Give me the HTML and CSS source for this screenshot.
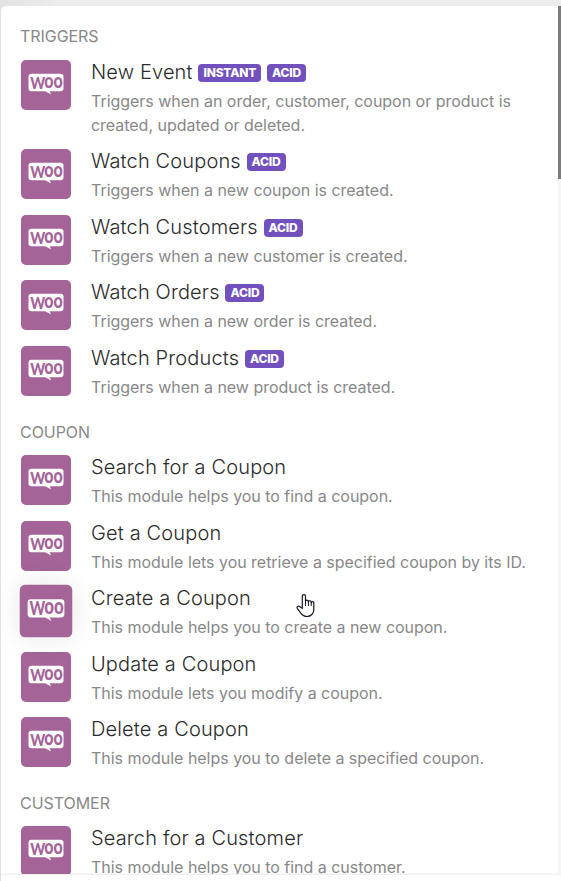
FILE: index.html
```
<!DOCTYPE html>
<html lang="en">
<head>
	<meta charset="utf-8">
	<title>WooCommerce modules</title>
	<link rel="stylesheet" href="styles.css">
</head>
<body>
	<svg class="defs" aria-hidden="true">
		<symbol id="woo" viewBox="0 0 50 50">
			<path fill="#fff" d="M10.500 13.700h29a3 3 0 0 1 3 3v11.500a3 3 0 0 1-3 3h-11l1.700 3.300-6-3.300h-13.700a3 3 0 0 1-3-3v-11.500a3 3 0 0 1 3-3z"/>
			<g class="logo-text">
				<text x="9.300" y="28.800" font-size="17.500" textLength="15" lengthAdjust="spacingAndGlyphs">W</text>
				<text x="23.300" y="28" font-size="21" textLength="18.500" lengthAdjust="spacingAndGlyphs">oo</text>
			</g>
		</symbol>
	</svg>

	<div class="panel">
		<div class="list">
			<h3 class="group">TRIGGERS</h3>
			<div class="module">
				<svg class="icon"><use href="#woo"/></svg>
				<div class="info">
					<div class="name">New Event <span class="badge">INSTANT</span> <span class="badge">ACID</span></div>
					<p>Triggers when an order, customer, coupon or product is created, updated or deleted.</p>
				</div>
			</div>
			<div class="module">
				<svg class="icon"><use href="#woo"/></svg>
				<div class="info">
					<div class="name">Watch Coupons <span class="badge">ACID</span></div>
					<p>Triggers when a new coupon is created.</p>
				</div>
			</div>
			<div class="module">
				<svg class="icon"><use href="#woo"/></svg>
				<div class="info">
					<div class="name">Watch Customers <span class="badge">ACID</span></div>
					<p>Triggers when a new customer is created.</p>
				</div>
			</div>
			<div class="module">
				<svg class="icon"><use href="#woo"/></svg>
				<div class="info">
					<div class="name">Watch Orders <span class="badge">ACID</span></div>
					<p>Triggers when a new order is created.</p>
				</div>
			</div>
			<div class="module">
				<svg class="icon"><use href="#woo"/></svg>
				<div class="info">
					<div class="name">Watch Products <span class="badge">ACID</span></div>
					<p>Triggers when a new product is created.</p>
				</div>
			</div>

			<h3 class="group">COUPON</h3>
			<div class="module">
				<svg class="icon"><use href="#woo"/></svg>
				<div class="info">
					<div class="name">Search for a Coupon</div>
					<p>This module helps you to find a coupon.</p>
				</div>
			</div>
			<div class="module">
				<svg class="icon"><use href="#woo"/></svg>
				<div class="info">
					<div class="name">Get a Coupon</div>
					<p>This module lets you retrieve a specified coupon by its ID.</p>
				</div>
			</div>
			<div class="module active">
				<svg class="icon"><use href="#woo"/></svg>
				<div class="info">
					<div class="name">Create a Coupon</div>
					<p>This module helps you to create a new coupon.</p>
				</div>
			</div>
			<div class="module">
				<svg class="icon"><use href="#woo"/></svg>
				<div class="info">
					<div class="name">Update a Coupon</div>
					<p>This module lets you modify a coupon.</p>
				</div>
			</div>
			<div class="module">
				<svg class="icon"><use href="#woo"/></svg>
				<div class="info">
					<div class="name">Delete a Coupon</div>
					<p>This module helps you to delete a specified coupon.</p>
				</div>
			</div>

			<h3 class="group">CUSTOMER</h3>
			<div class="module">
				<svg class="icon"><use href="#woo"/></svg>
				<div class="info">
					<div class="name">Search for a Customer</div>
					<p>This module helps you to find a customer.</p>
				</div>
			</div>
		</div>
		<div class="scrollbar"><div class="thumb"></div></div>
	</div>

	<svg class="cursor" viewBox="0 0 20 26">
		<path fill="#fff" stroke="#15152a" stroke-width="1.200" stroke-linejoin="round" d="M6.300 15.500V3.200a1.600 1.600 0 0 1 3.200 0v5.300a1.400 1.400 0 0 1 2.900 0v.5a1.400 1.400 0 0 1 2.800.3v.5a1.300 1.300 0 0 1 2.600.2v6.500c0 4-2.800 7-6.800 7-2.800 0-4.500-1.200-6-3.200l-3.700-5c-.9-1.400.7-2.700 2.200-1.700z"/>
		<path fill="none" stroke="#15152a" stroke-width="1" d="M9.500 8v5M12.400 9v4M15.200 9.500v3.500"/>
	</svg>
</body>
</html>
```

FILE: styles.css
```
* {
	box-sizing: border-box;
}

body {
	margin: 0;
	height: 881px;
	padding: 6px 0 0 1px;
	overflow: hidden;
	background: linear-gradient(90deg, #e2e2e2, #ededed 60px);
	font-family: Inter, "Liberation Sans", sans-serif;
}

.defs {
	display: none;
}

.panel {
	display: flex;
	height: 875px;
	padding-bottom: 7px;
	background: linear-gradient(#fff, #fff 867px, #f0f0f0 868px, #f0f0f0 869px, #fff 869px);
	border-top-left-radius: 5px;
}

.list {
	flex: 1;
	height: 868px;
	padding: 10.100px 0 0 20px;
	overflow: hidden;
}

.group {
	height: 43.800px;
	margin: 0 0 0 -1px;
	padding-top: 8.200px;
	font-size: 16px;
	font-weight: 400;
	line-height: 24px;
	letter-spacing: -.05px;
	color: #888;
}

.module {
	display: flex;
	gap: 20px;
	padding-bottom: 12.500px;
}

.icon {
	flex: none;
	width: 50px;
	height: 50px;
	border-radius: 5px;
	background: #a46497;
}

.active .icon {
	transform: scale(1.050);
	box-shadow: 0 0 25px rgba(0, 0, 0, .1);
}

.logo-text {
	font-family: Lato, "Liberation Sans", sans-serif;
	font-weight: 900;
	fill: #a46497;
}

.info {
	width: 440px;
}

.name {
	height: 29px;
	font-size: 20px;
	font-weight: 300;
	line-height: 24px;
	letter-spacing: .15px;
	white-space: nowrap;
	color: #2b2b2b;
}

.badge {
	display: inline-block;
	height: 18px;
	padding: 0 5px;
	border-radius: 4px;
	background: #7250be;
	font-size: 12px;
	font-weight: 800;
	line-height: 18px;
	letter-spacing: -.2px;
	vertical-align: 2px;
	color: #fff;
}

p {
	margin: 0;
	font-size: 16px;
	line-height: 24px;
	letter-spacing: -.025px;
	color: #888;
}

.scrollbar {
	width: 3px;
	height: 868px;
	background: #f6f6f6;
}

.thumb {
	height: 173px;
	background: #7c7c7c;
}

.cursor {
	position: absolute;
	left: 296px;
	top: 593px;
	width: 20px;
	height: 26px;
}
```
